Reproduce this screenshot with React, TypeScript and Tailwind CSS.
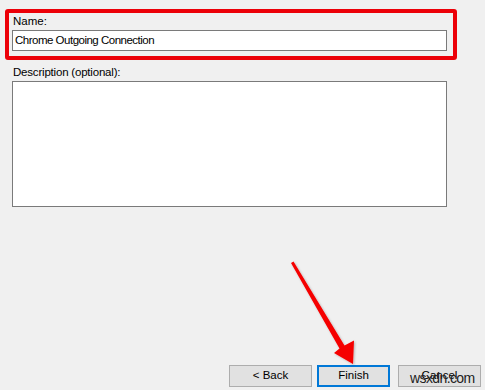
import React from 'react';

const font = { fontFamily: '"Liberation Sans", Arial, sans-serif' };

const DialogButton: React.FC<{ label: string; width: string; primary?: boolean }> = ({ label, width, primary }) => (
    <button
        className={
            primary
                ? `${width} h-[22px] bg-[#e1e1e1] border-2 border-[#0078d7] text-[11.5px] text-black flex items-center justify-center`
                : `${width} h-[22px] bg-[#e1e1e1] border border-[#adadad] text-[11.5px] text-black flex items-center justify-center`
        }
    >
        {label}
    </button>
);

const App: React.FC = () => {
    return (
        <div className="relative w-[485px] h-[390px] bg-[#f0f0f0] overflow-hidden flex flex-col text-black" style={font}>
            {/* Name field, highlighted */}
            <div className="pt-[9px] pl-[5px]">
                <div className="w-[452px] border-4 border-[#ec0008] rounded-[3px] pl-[3px] pt-[1px] pb-[5px]">
                    <div className="text-[11.5px] leading-[14px] pl-[1px]">Name:</div>
                    <div className="mt-[2px] w-[435px] h-[21px] bg-white border border-[#7a7a7a] flex items-center pl-[2px] text-[11.5px] tracking-[-0.5px]">
                        Chrome Outgoing Connection
                    </div>
                </div>
            </div>

            {/* Description */}
            <div className="pl-[12px] pt-[5px]">
                <div className="text-[11.5px] leading-[14px] pl-[1px] tracking-[-0.2px]">Description (optional):</div>
                <div className="mt-[2px] w-[435px] h-[126px] bg-white border border-[#7a7a7a]"></div>
            </div>

            {/* Wizard buttons */}
            <div className="mt-auto pb-[3px] pr-[4px] flex justify-end">
                <DialogButton label="< Back" width="w-[83px]" />
                <div className="w-[5px]" />
                <DialogButton label="Finish" width="w-[73px]" primary />
                <div className="w-[8px]" />
                <DialogButton label="Cancel" width="w-[83px]" />
            </div>

            {/* annotation arrow */}
            <svg className="absolute inset-0 pointer-events-none" width="485" height="390" viewBox="0 0 485 390">
                <defs>
                    <filter id="sh" x="-20%" y="-20%" width="140%" height="140%">
                        <feDropShadow dx="1" dy="1" stdDeviation="1" floodColor="#000" floodOpacity="0.25" />
                    </filter>
                </defs>
                <polygon
                    points="291,263 293.5,261.5 344.5,345.5 354,340.5 353,364 334,353 339.5,348.5"
                    fill="#f50000"
                    filter="url(#sh)"
                />
            </svg>

            {/* watermark */}
            <div className="absolute left-[410px] top-[370px] text-[14px] leading-[16px] tracking-[-0.6px] text-[#222]">
                wsxdn.com
            </div>
        </div>
    );
};

export default App;
